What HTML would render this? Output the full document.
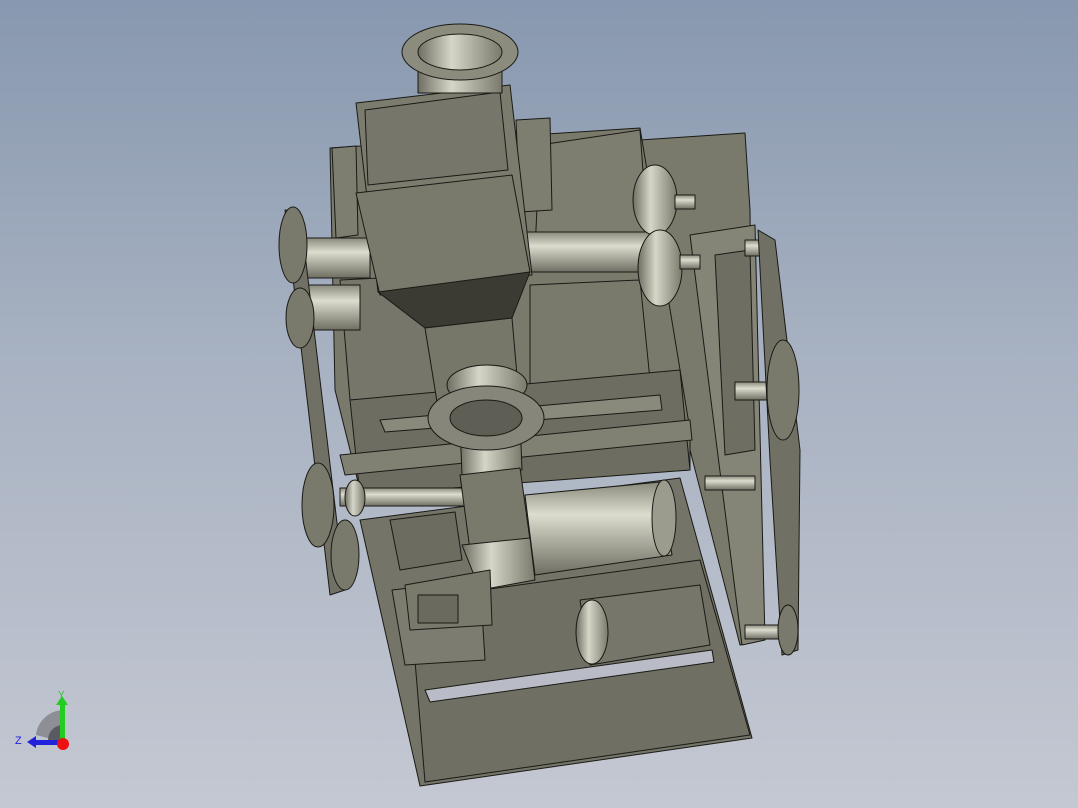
<!DOCTYPE html>
<html><head><style>
html,body{margin:0;padding:0}
body{width:1078px;height:808px;overflow:hidden;background:linear-gradient(180deg,#8898af 0%,#a8b2c2 45%,#c4c8d2 100%);font-family:"Liberation Sans",sans-serif}
svg{position:absolute;left:0;top:0}
</style></head><body>
<svg width="1078" height="808" viewBox="0 0 1078 808">
<defs>
<linearGradient id="cyl" x1="0" y1="0" x2="1" y2="0"><stop offset="0" stop-color="#6e6e62"/><stop offset="0.4" stop-color="#d6d6c8"/><stop offset="1" stop-color="#7a7a6c"/></linearGradient>
<linearGradient id="cylv" x1="0" y1="0" x2="0" y2="1"><stop offset="0" stop-color="#8a8a7c"/><stop offset="0.35" stop-color="#dcdccf"/><stop offset="1" stop-color="#6e6e62"/></linearGradient>
</defs>
<g stroke="#1a1a16" stroke-width="1" stroke-linejoin="round">
<!-- base box -->
<polygon points="360,520 680,478 752,738 420,786" fill="#747468"/>
<polygon points="410,600 700,560 750,735 425,782" fill="#6f6f63"/>
<polygon points="425,690 712,650 714,662 430,702" fill="#b9bcc6"/>
<polygon points="392,590 480,580 485,660 405,665" fill="#7c7c70"/>
<!-- right frame -->
<polygon points="640,140 745,133 750,210 755,640 740,645 690,450 650,330" fill="#7a7a6c"/>
<polygon points="690,235 755,225 765,640 742,645" fill="#858577"/>
<polygon points="715,255 750,250 755,450 725,455" fill="#6e6e62"/>
<!-- main body -->
<polygon points="330,148 640,128 690,430 690,470 360,490 335,390" fill="#7a7a6c"/>
<polygon points="540,145 640,130 648,240 535,250" fill="#7d7d70"/>
<polygon points="530,285 640,280 650,380 530,395" fill="#7a7a6c"/>
<polygon points="340,280 440,275 445,395 350,400" fill="#76766a"/>
<polygon points="350,400 680,370 690,470 360,495" fill="#6d6d61"/>
<polygon points="380,420 660,395 662,410 385,432" fill="#8a8a7c"/>
<polygon points="340,455 690,420 692,440 345,475" fill="#808073"/>
<!-- rollers -->
<rect x="520" y="232" width="130" height="40" fill="url(#cylv)"/>
<rect x="300" y="238" width="70" height="40" fill="url(#cylv)"/>
<rect x="300" y="285" width="60" height="45" fill="url(#cylv)"/>
<ellipse cx="655" cy="200" rx="22" ry="35" fill="url(#cyl)"/>
<ellipse cx="660" cy="268" rx="22" ry="38" fill="url(#cyl)"/>
<rect x="675" y="195" width="20" height="14" fill="url(#cylv)"/>
<rect x="680" y="255" width="20" height="14" fill="url(#cylv)"/>
<rect x="745" y="240" width="25" height="16" fill="url(#cylv)"/>
<rect x="735" y="382" width="40" height="18" fill="url(#cylv)"/>
<rect x="705" y="476" width="50" height="14" fill="url(#cylv)"/>
<rect x="745" y="625" width="40" height="14" fill="url(#cylv)"/>
<!-- left belts -->
<path d="M285,210 L300,212 L345,590 L330,595 Z" fill="#707064"/>
<ellipse cx="293" cy="245" rx="14" ry="38" fill="#7a7a6c"/>
<ellipse cx="300" cy="318" rx="14" ry="30" fill="#7a7a6c"/>
<ellipse cx="318" cy="505" rx="16" ry="42" fill="#7a7a6c"/>
<ellipse cx="345" cy="555" rx="14" ry="35" fill="#7a7a6c"/>
<!-- right belt -->
<path d="M758,230 L775,240 L800,450 L798,650 L782,655 L770,460 Z" fill="#707064"/>
<ellipse cx="783" cy="390" rx="16" ry="50" fill="#7a7a6c"/>
<ellipse cx="788" cy="630" rx="10" ry="25" fill="#7a7a6c"/>
<!-- horizontal shaft -->
<rect x="340" y="488" width="130" height="18" fill="url(#cylv)"/>
<ellipse cx="355" cy="498" rx="10" ry="18" fill="url(#cyl)"/>
<!-- hopper -->
<polygon points="332,148 356,146 358,235 336,238" fill="#7d7d70"/>
<polygon points="516,120 550,118 552,210 520,212" fill="#7d7d70"/>
<polygon points="356,103 510,85 532,275 378,292" fill="#7c7c6e"/>
<polygon points="365,110 500,92 508,170 368,185" fill="#76766a"/>
<polygon points="356,193 512,175 530,272 380,295" fill="#7a7a6c"/>
<polygon points="378,292 530,272 512,318 425,328" fill="#3b3b33"/>
<polygon points="425,328 512,318 520,410 440,420" fill="#767669"/>
<!-- top flange -->
<rect x="418" y="55" width="84" height="38" fill="url(#cyl)"/>
<ellipse cx="460" cy="52" rx="58" ry="28" fill="#8c8c7e"/>
<ellipse cx="460" cy="52" rx="42" ry="18" fill="url(#cyl)"/>
<!-- lower flange -->
<polygon points="460,425 520,420 522,470 462,475" fill="url(#cyl)"/>
<ellipse cx="487" cy="385" rx="40" ry="20" fill="url(#cyl)"/>
<ellipse cx="486" cy="418" rx="58" ry="32" fill="#86867a"/>
<ellipse cx="486" cy="418" rx="36" ry="18" fill="#5e5e54"/>
<!-- gearbox -->
<polygon points="460,475 520,468 530,540 470,550" fill="#7a7a6c"/>
<polygon points="462,545 530,538 535,580 480,590" fill="url(#cyl)"/>
<!-- motor -->
<polygon points="525,495 660,482 672,555 535,575" fill="url(#cylv)"/>
<ellipse cx="664" cy="518" rx="12" ry="38" fill="#9c9c8e"/>
<polygon points="580,600 700,585 710,645 590,665" fill="#76766a"/>
<ellipse cx="592" cy="632" rx="16" ry="32" fill="url(#cyl)"/>
<polygon points="390,520 455,512 462,560 400,570" fill="#6c6c60"/>
<polygon points="405,585 490,570 492,625 410,630" fill="#7a7a6c"/>
<rect x="418" y="595" width="40" height="28" fill="#6a6a5e"/>
</g>
<!-- triad -->
<path d="M36,735 A28,28 0 0 1 63,710 L63,742 Z" fill="#8e8f95"/>
<path d="M48,740 A15,15 0 0 1 63,725 L63,742 Z" fill="#5a5b60"/>
<rect x="60" y="702" width="5" height="38" fill="#22cc22"/>
<polygon points="56,705 62,696 68,705" fill="#22cc22"/>
<rect x="33" y="740" width="28" height="5" fill="#2222dd"/>
<polygon points="36,736 27,742 36,748" fill="#2222dd"/>
<circle cx="63" cy="744" r="6" fill="#ee1111"/>
<text x="58" y="698" font-size="10" fill="#22cc22">Y</text>
<text x="15" y="744" font-size="11" fill="#2222dd">Z</text>
</svg>
</body></html>
